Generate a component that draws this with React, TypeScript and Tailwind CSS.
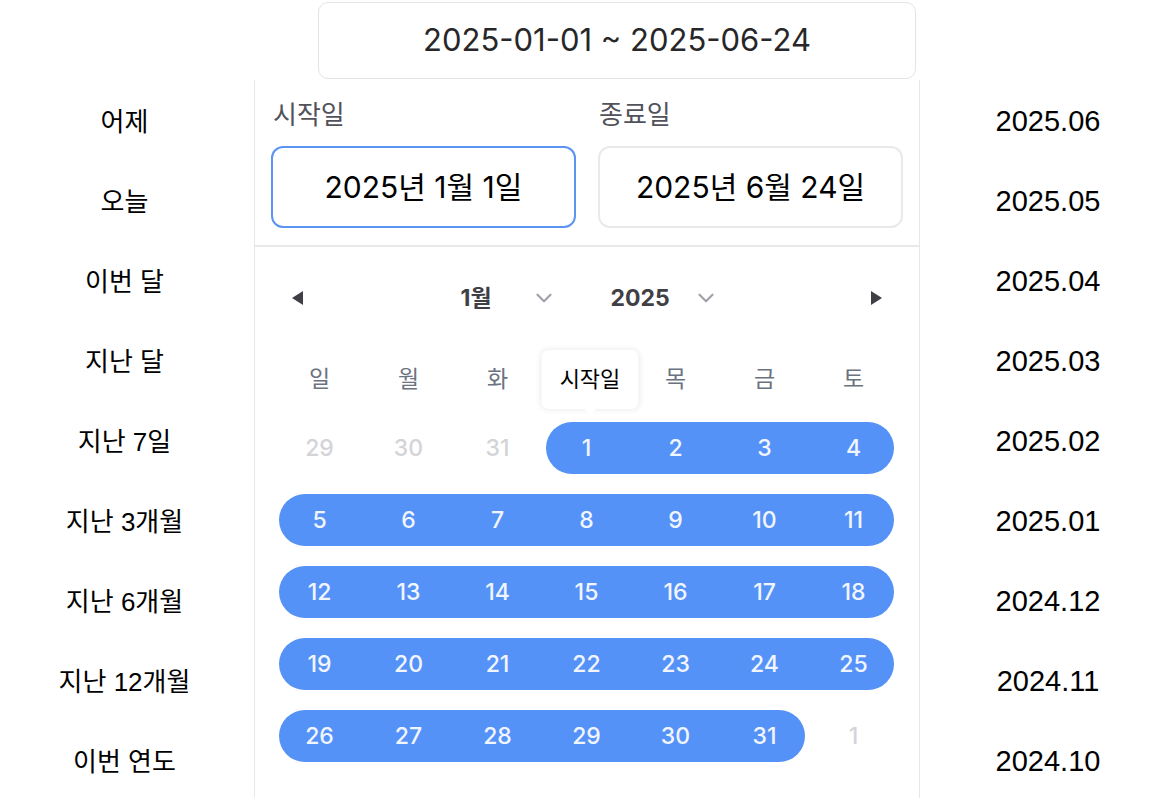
import { ChevronDown } from "lucide-react";

const presets = ["어제", "오늘", "이번 달", "지난 달", "지난 7일", "지난 3개월", "지난 6개월", "지난 12개월", "이번 연도"];
const months = ["2025.06", "2025.05", "2025.04", "2025.03", "2025.02", "2025.01", "2024.12", "2024.11", "2024.10"];
const weekdays = ["일", "월", "화", "수", "목", "금", "토"];
const colStart = ["col-start-1", "col-start-2", "col-start-3", "col-start-4", "col-start-5", "col-start-6", "col-start-7"];

const weeks: { days: { n: number; muted?: boolean }[]; pill: string }[] = [
  { days: [{ n: 29, muted: true }, { n: 30, muted: true }, { n: 31, muted: true }, { n: 1 }, { n: 2 }, { n: 3 }, { n: 4 }], pill: "col-start-4 col-end-8" },
  { days: [5, 6, 7, 8, 9, 10, 11].map((n) => ({ n })), pill: "col-start-1 col-end-8" },
  { days: [12, 13, 14, 15, 16, 17, 18].map((n) => ({ n })), pill: "col-start-1 col-end-8" },
  { days: [19, 20, 21, 22, 23, 24, 25].map((n) => ({ n })), pill: "col-start-1 col-end-8" },
  { days: [{ n: 26 }, { n: 27 }, { n: 28 }, { n: 29 }, { n: 30 }, { n: 31 }, { n: 1, muted: true }], pill: "col-start-1 col-end-7" },
];

function Triangle({ dir }: { dir: "left" | "right" }) {
  return (
    <svg width="11" height="14" viewBox="0 0 11 14" className="fill-[#3f3f46]">
      {dir === "left" ? <path d="M11 0 L0 7 L11 14 Z" /> : <path d="M0 0 L11 7 L0 14 Z" />}
    </svg>
  );
}

export default function App() {
  return (
    <div className="w-[1160px] h-[798px] overflow-hidden bg-white font-['Inter','Noto_Sans_CJK_KR',sans-serif]">
      {/* range field */}
      <div className="h-[80px] pl-[318px] pt-[2px]">
        <div className="w-[598px] h-[77px] rounded-[10px] border border-[#e4e4e7] flex items-center justify-center text-[31px] text-[#27272a]">
          2025-01-01 ~ 2025-06-24
        </div>
      </div>

      <div className="flex">
        {/* presets */}
        <div className="w-[254px] pr-[5px] pt-[2px] flex flex-col font-['Liberation_Sans','Noto_Sans_CJK_KR',sans-serif] text-[26px] text-black">
          {presets.map((p) => (
            <div key={p} className="h-[80px] flex items-center justify-center">{p}</div>
          ))}
        </div>

        {/* picker panel */}
        <div className="w-[666px] h-[718px] border-x border-[#e5e7eb]">
          <div className="px-[16px] pt-[18px] pb-[17px] border-b-2 border-[#e9e9ec] flex gap-[22px]">
            <div className="w-[305px]">
              <div className="text-[26px] leading-[33px] text-[#52525b] pl-[2px] mb-[15px]">시작일</div>
              <div className="h-[82px] rounded-[12px] border-2 border-[#5b93f3] flex items-center justify-center text-[30px] text-black">
                2025년 1월 1일
              </div>
            </div>
            <div className="w-[305px]">
              <div className="text-[26px] leading-[33px] text-[#52525b] pl-[1px] mb-[15px]">종료일</div>
              <div className="h-[82px] rounded-[12px] border-2 border-[#e9e9ec] flex items-center justify-center text-[30px] text-black">
                2025년 6월 24일
              </div>
            </div>
          </div>

          <div className="pl-[20px]">
            {/* header */}
            <div className="mt-[29px] w-[623px] h-[44px] flex items-center">
              <div className="w-[44px] flex justify-center"><Triangle dir="left" /></div>
              <div className="flex-1 pl-[6px] flex items-center justify-center gap-[54px] text-[23px] font-bold text-[#3f3f46]">
                <div className="flex items-center w-[96px]">
                  <span>1월</span>
                  <ChevronDown className="ml-auto text-[#a1a1aa]" size={26} strokeWidth={2} />
                </div>
                <div className="flex items-center w-[108px]">
                  <span>2025</span>
                  <ChevronDown className="ml-auto text-[#a1a1aa]" size={26} strokeWidth={2} />
                </div>
              </div>
              <div className="w-[44px] flex justify-center"><Triangle dir="right" /></div>
            </div>

            {/* weekdays */}
            <div className="mt-[37px] grid grid-cols-[repeat(7,89px)] h-[44px]">
              {weekdays.map((d, i) => (
                <div key={d} className="relative flex items-center justify-center text-[23px] text-[#6b7280]">
                  {i === 3 ? (
                    <div className="absolute left-[48px] top-[-7px] -translate-x-1/2 w-[97px] h-[59px] rounded-[7px] bg-white shadow-[0_0_6px_rgba(0,0,0,0.1)] flex items-center justify-center text-[22px] text-black">
                      시작일
                      <div className="absolute left-1/2 bottom-[-6px] -translate-x-1/2 w-0 h-0 border-x-[7px] border-x-transparent border-t-[7px] border-t-white" />
                    </div>
                  ) : (
                    d
                  )}
                </div>
              ))}
            </div>

            {/* dates */}
            <div className="mt-[21px] flex flex-col gap-[20px]">
              {weeks.map((w, wi) => (
                <div key={wi} className="grid grid-cols-[repeat(7,89px)] h-[52px]">
                  <div className={`${w.pill} row-start-1 mx-[4px] rounded-full bg-[#5592f7]`} />
                  {w.days.map((d, di) => (
                    <div
                      key={di}
                      className={`${colStart[di]} row-start-1 flex items-center justify-center text-[23px] font-medium ${d.muted ? "text-[#d4d4d8]" : "text-[#f1f5ff]"}`}
                    >
                      {d.n}
                    </div>
                  ))}
                </div>
              ))}
            </div>
          </div>
        </div>

        {/* months */}
        <div className="flex-1 pl-[16px] pt-[2px] flex flex-col font-['Liberation_Sans',sans-serif] text-[29px] text-black">
          {months.map((m) => (
            <div key={m} className="h-[80px] flex items-center justify-center">{m}</div>
          ))}
        </div>
      </div>
    </div>
  );
}
